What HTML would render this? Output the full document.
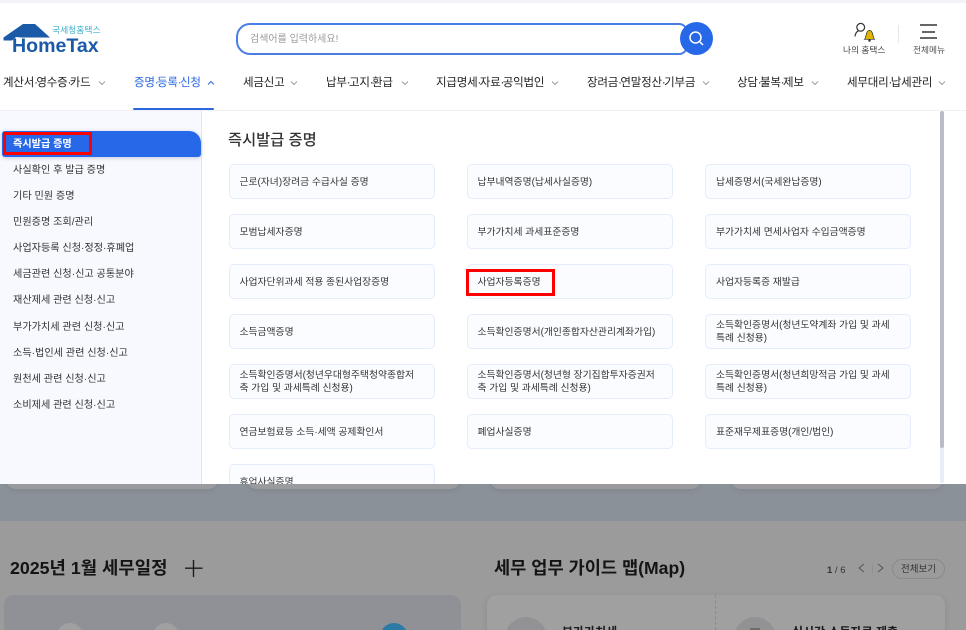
<!DOCTYPE html>
<html lang="ko"><head><meta charset="utf-8">
<style>
*{box-sizing:border-box;margin:0;padding:0}
html,body{width:966px;height:630px;overflow:hidden;background:#fff}
body{position:relative;font-family:"Liberation Sans","Noto Sans CJK KR",sans-serif;color:#333}
.a{position:absolute;white-space:nowrap}
.nav{top:74px;font-size:11.5px;letter-spacing:-.2px;line-height:18px;color:#222}
.nav i{font-style:normal;letter-spacing:-1.6px}
.nav.on{color:#2b68e0}
.side{left:13px;font-size:10.15px;line-height:14px;color:#333}
.card{position:absolute;width:206px;height:35px;background:#fbfcff;border:1px solid #e5ecfc;border-radius:5px;font-size:9.8px;line-height:13px;color:#333;padding:2px 10px 0;display:flex;align-items:center;white-space:nowrap}
.card span{margin-top:-2px}
.c1{left:228.5px}.c2{left:466.5px}.c3{left:705px}
.red{position:absolute;border:3px solid #f00}
.ocard{position:absolute;top:478px;height:11px;background:#9a9b9e;border-radius:0 0 10px 10px;box-shadow:0 2px 4px rgba(60,60,70,.1)}
</style></head><body>
<div class="a" style="left:0;top:0;width:966px;height:3px;background:#f1f3f9"></div>

<!-- logo -->
<svg class="a" style="left:0;top:20px" width="56" height="26" viewBox="0 0 56 26">
<path d="M3.500 17.500 L23 4 H35 L50 17.500 H21 L16 17 L12 20.500 H3.500 Z" fill="#1b5aa6"/>
</svg>
<div class="a" style="left:52px;top:24px;font-size:8.8px;line-height:13px;color:#3cb1cc">국세청홈택스</div>
<div class="a" style="left:12px;top:36.500px;font-size:19px;line-height:20px;font-weight:700;color:#1b5aa6;transform:scaleX(1.03);transform-origin:0 0">HomeTax</div>

<!-- search -->
<div class="a" style="left:236px;top:23px;width:452px;height:32px;border:2px solid #4a7de6;border-radius:14px 9px 9px 14px;background:#fff"></div>
<div class="a" style="left:250px;top:33px;font-size:10px;line-height:14px;color:#9a9a9a">검색어를 입력하세요!</div>
<svg class="a" style="left:680px;top:22px" width="33" height="33" viewBox="0 0 33 33">
<circle cx="16.500" cy="16.500" r="16.500" fill="#2668e8"/>
<circle cx="15.500" cy="15.500" r="5.500" fill="none" stroke="#fff" stroke-width="1.500"/>
<path d="M19.500 19.500 L23 23" stroke="#fff" stroke-width="1.500"/>
</svg>

<!-- my hometax -->
<svg class="a" style="left:852px;top:21px" width="26" height="22" viewBox="0 0 26 22">
<circle cx="8.700" cy="6.300" r="3.900" fill="none" stroke="#333" stroke-width="1.200"/>
<path d="M3 15.500 C3.300 12.500 4.500 11 6.300 9.800" fill="none" stroke="#333" stroke-width="1.200"/>
<path d="M12.500 18.300 C14.500 16.500 13.500 9.800 17.500 9.300 C21.500 9.800 20.500 16.500 22.500 18.300Z" fill="#e2b600" stroke="#2a2a2a" stroke-width=".7"/>
<circle cx="17.500" cy="19.600" r="1.200" fill="#333"/>
</svg>
<div class="a" style="left:843px;top:43.500px;font-size:8.700px;line-height:13px;color:#444">나의 홈택스</div>
<div class="a" style="left:898px;top:25px;width:1px;height:18px;background:#e5e7ec"></div>
<div class="a" style="left:920px;top:24px;width:17px;height:2px;background:#666"></div>
<div class="a" style="left:922px;top:31px;width:13px;height:2px;background:#666"></div>
<div class="a" style="left:920px;top:37px;width:17px;height:2px;background:#666"></div>
<div class="a" style="left:913px;top:43.500px;font-size:8.700px;line-height:13px;color:#555">전체메뉴</div>

<!-- nav -->
<div class="a nav" style="left:3px">계산서<i>·</i>영수증<i>·</i>카드</div>
<div class="a nav on" style="left:134px">증명<i>·</i>등록<i>·</i>신청</div>
<div class="a nav" style="left:243px">세금신고</div>
<div class="a nav" style="left:326px">납부<i>·</i>고지<i>·</i>환급</div>
<div class="a nav" style="left:436px">지급명세<i>·</i>자료<i>·</i>공익법인</div>
<div class="a nav" style="left:587px">장려금<i>·</i>연말정산<i>·</i>기부금</div>
<div class="a nav" style="left:737px">상담<i>·</i>불복<i>·</i>제보</div>
<div class="a nav" style="left:847px">세무대리<i>·</i>납세관리</div>
<svg class="a" style="left:0;top:78px" width="966" height="10" fill="none" stroke="#9a9ea5" stroke-width="1">
<path d="M99 3.500l3 3 3-3M291 3.500l3 3 3-3M402 3.500l3 3 3-3M552 3.500l3 3 3-3M703 3.500l3 3 3-3M812 3.500l3 3 3-3M939 3.500l3 3 3-3"/>
<path d="M208 6.500l3-3 3 3" stroke="#2b68e0"/>
</svg>
<div class="a" style="left:133px;top:108px;width:81px;height:2px;background:#2b68e0;border-radius:1px"></div>
<div class="a" style="left:0;top:110px;width:966px;height:1px;background:#eef0f4"></div>

<!-- sidebar -->
<div class="a" style="left:0;top:111px;width:202px;height:373px;background:#f8f9fe;border-right:1px solid #dfe6f5"></div>
<div class="a" style="left:2px;top:131px;width:199px;height:26px;background:#2668e8;border-radius:3px 12px 3px 3px;box-shadow:0 1px 4px rgba(40,60,120,.25)"></div>
<div class="a side" style="top:138px;color:#fff;font-weight:700">즉시발급 증명</div>
<div class="red" style="left:3px;top:132px;width:89px;height:23px"></div>
<div class="a side" style="top:164px">사실확인 후 발급 증명</div>
<div class="a side" style="top:190px">기타 민원 증명</div>
<div class="a side" style="top:216px">민원증명 조회/관리</div>
<div class="a side" style="top:242px">사업자등록 신청·정정·휴폐업</div>
<div class="a side" style="top:268px">세금관련 신청·신고 공통분야</div>
<div class="a side" style="top:294px">재산제세 관련 신청·신고</div>
<div class="a side" style="top:321px">부가가치세 관련 신청·신고</div>
<div class="a side" style="top:347px">소득·법인세 관련 신청·신고</div>
<div class="a side" style="top:373px">원천세 관련 신청·신고</div>
<div class="a side" style="top:399px">소비제세 관련 신청·신고</div>

<!-- content -->
<div class="a" style="left:228px;top:130px;font-size:15.300px;line-height:21px;color:#333;font-weight:500">즉시발급 증명</div>

<div class="card c1" style="top:164px">근로(자녀)장려금 수급사실 증명</div>
<div class="card c2" style="top:164px">납부내역증명(납세사실증명)</div>
<div class="card c3" style="top:164px">납세증명서(국세완납증명)</div>
<div class="card c1" style="top:214px">모범납세자증명</div>
<div class="card c2" style="top:214px">부가가치세 과세표준증명</div>
<div class="card c3" style="top:214px">부가가치세 면세사업자 수입금액증명</div>
<div class="card c1" style="top:264px">사업자단위과세 적용 종된사업장증명</div>
<div class="card c2" style="top:264px">사업자등록증명</div>
<div class="card c3" style="top:264px">사업자등록증 재발급</div>
<div class="card c1" style="top:314px">소득금액증명</div>
<div class="card c2" style="top:314px">소득확인증명서(개인종합자산관리계좌가입)</div>
<div class="card c3" style="top:314px"><span>소득확인증명서(청년도약계좌 가입 및 과세<br>특례 신청용)</span></div>
<div class="card c1" style="top:364px"><span>소득확인증명서(청년우대형주택청약종합저<br>축 가입 및 과세특례 신청용)</span></div>
<div class="card c2" style="top:364px"><span>소득확인증명서(청년형 장기집합투자증권저<br>축 가입 및 과세특례 신청용)</span></div>
<div class="card c3" style="top:364px"><span>소득확인증명서(청년희망적금 가입 및 과세<br>특례 신청용)</span></div>
<div class="card c1" style="top:414px">연금보험료등 소득·세액 공제확인서</div>
<div class="card c2" style="top:414px">폐업사실증명</div>
<div class="card c3" style="top:414px">표준재무제표증명(개인/법인)</div>
<div class="card c1" style="top:464px">휴업사실증명</div>
<div class="red" style="left:466px;top:269px;width:89px;height:27px"></div>

<!-- scrollbar -->
<div class="a" style="left:940px;top:111px;width:4px;height:372px;background:#e8ecf6;border-radius:2px"></div>
<div class="a" style="left:940px;top:111px;width:4px;height:337px;background:#b9bcc7;border-radius:2px"></div>

<!-- lower dimmed page -->
<div class="a" style="left:0;top:484px;width:966px;height:37px;background:#8a9199"></div>
<div class="a" style="left:0;top:521px;width:966px;height:109px;background:#9b9b9b"></div>
<div class="ocard" style="left:6px;width:212px;clip-path:inset(6px -10px -10px -10px)"></div>
<div class="ocard" style="left:247px;width:213px;clip-path:inset(6px -10px -10px -10px)"></div>
<div class="ocard" style="left:490px;width:211px;clip-path:inset(6px -10px -10px -10px)"></div>
<div class="ocard" style="left:731px;width:212px;clip-path:inset(6px -10px -10px -10px)"></div>

<div class="a" style="left:10px;top:556px;font-size:17.800px;line-height:25px;font-weight:700;color:#141414">2025년 1월 세무일정</div>
<svg class="a" style="left:184px;top:559px" width="20" height="19" fill="none" stroke="#1c1c1c" stroke-width="1.400"><path d="M1 9.200H18.500M9.500 1V18"/></svg>
<div class="a" style="left:4px;top:595px;width:457px;height:40px;background:#909196;border-radius:10px 10px 0 0"></div>
<div class="a" style="left:57px;top:623px;width:26px;height:26px;border-radius:50%;background:#a0a0a0"></div>
<div class="a" style="left:153px;top:623px;width:26px;height:26px;border-radius:50%;background:#a0a0a0"></div>
<div class="a" style="left:380px;top:623px;width:28px;height:28px;border-radius:50%;background:#2c7ba6"></div>

<div class="a" style="left:494px;top:555px;font-size:17.600px;line-height:26px;font-weight:700;color:#141414">세무 업무 가이드 맵(Map)</div>
<div class="a" style="left:827px;top:564px;font-size:9.500px;line-height:13px;color:#333"><b>1</b> / 6</div>
<svg class="a" style="left:855px;top:561px" width="32" height="14" fill="none" stroke="#555" stroke-width="1"><path d="M9 3l-5 4 5 4M23 3l5 4-5 4"/><path d="M17.500 3v9" stroke="#8a8a8a" stroke-width=".6"/></svg>
<div class="a" style="left:892px;top:559px;width:53px;height:20px;border:1px solid #8a8a8a;border-radius:10px;font-size:9.500px;line-height:20px;text-align:center;color:#333">전체보기</div>
<div class="a" style="left:487px;top:595px;width:458px;height:40px;background:#a0a0a0;border-radius:10px 10px 0 0;box-shadow:0 2px 6px rgba(70,70,70,.2)"></div>
<div class="a" style="left:715px;top:595px;height:35px;border-left:1px dashed #8a8a8a"></div>
<div class="a" style="left:505px;top:617px;width:42px;height:42px;border-radius:50%;background:#929294"></div>
<div class="a" style="left:734px;top:617px;width:42px;height:42px;border-radius:50%;background:#929294"></div>
<div class="a" style="left:750px;top:628px;width:10px;height:2px;background:#6d6d6d"></div>
<div class="a" style="left:562px;top:624px;font-size:12px;line-height:17px;font-weight:700;color:#1a1a1a">부가가치세</div>
<div class="a" style="left:792px;top:624px;font-size:12px;line-height:17px;font-weight:700;color:#1a1a1a">실시간 소득자료 제출</div>
</body></html>
